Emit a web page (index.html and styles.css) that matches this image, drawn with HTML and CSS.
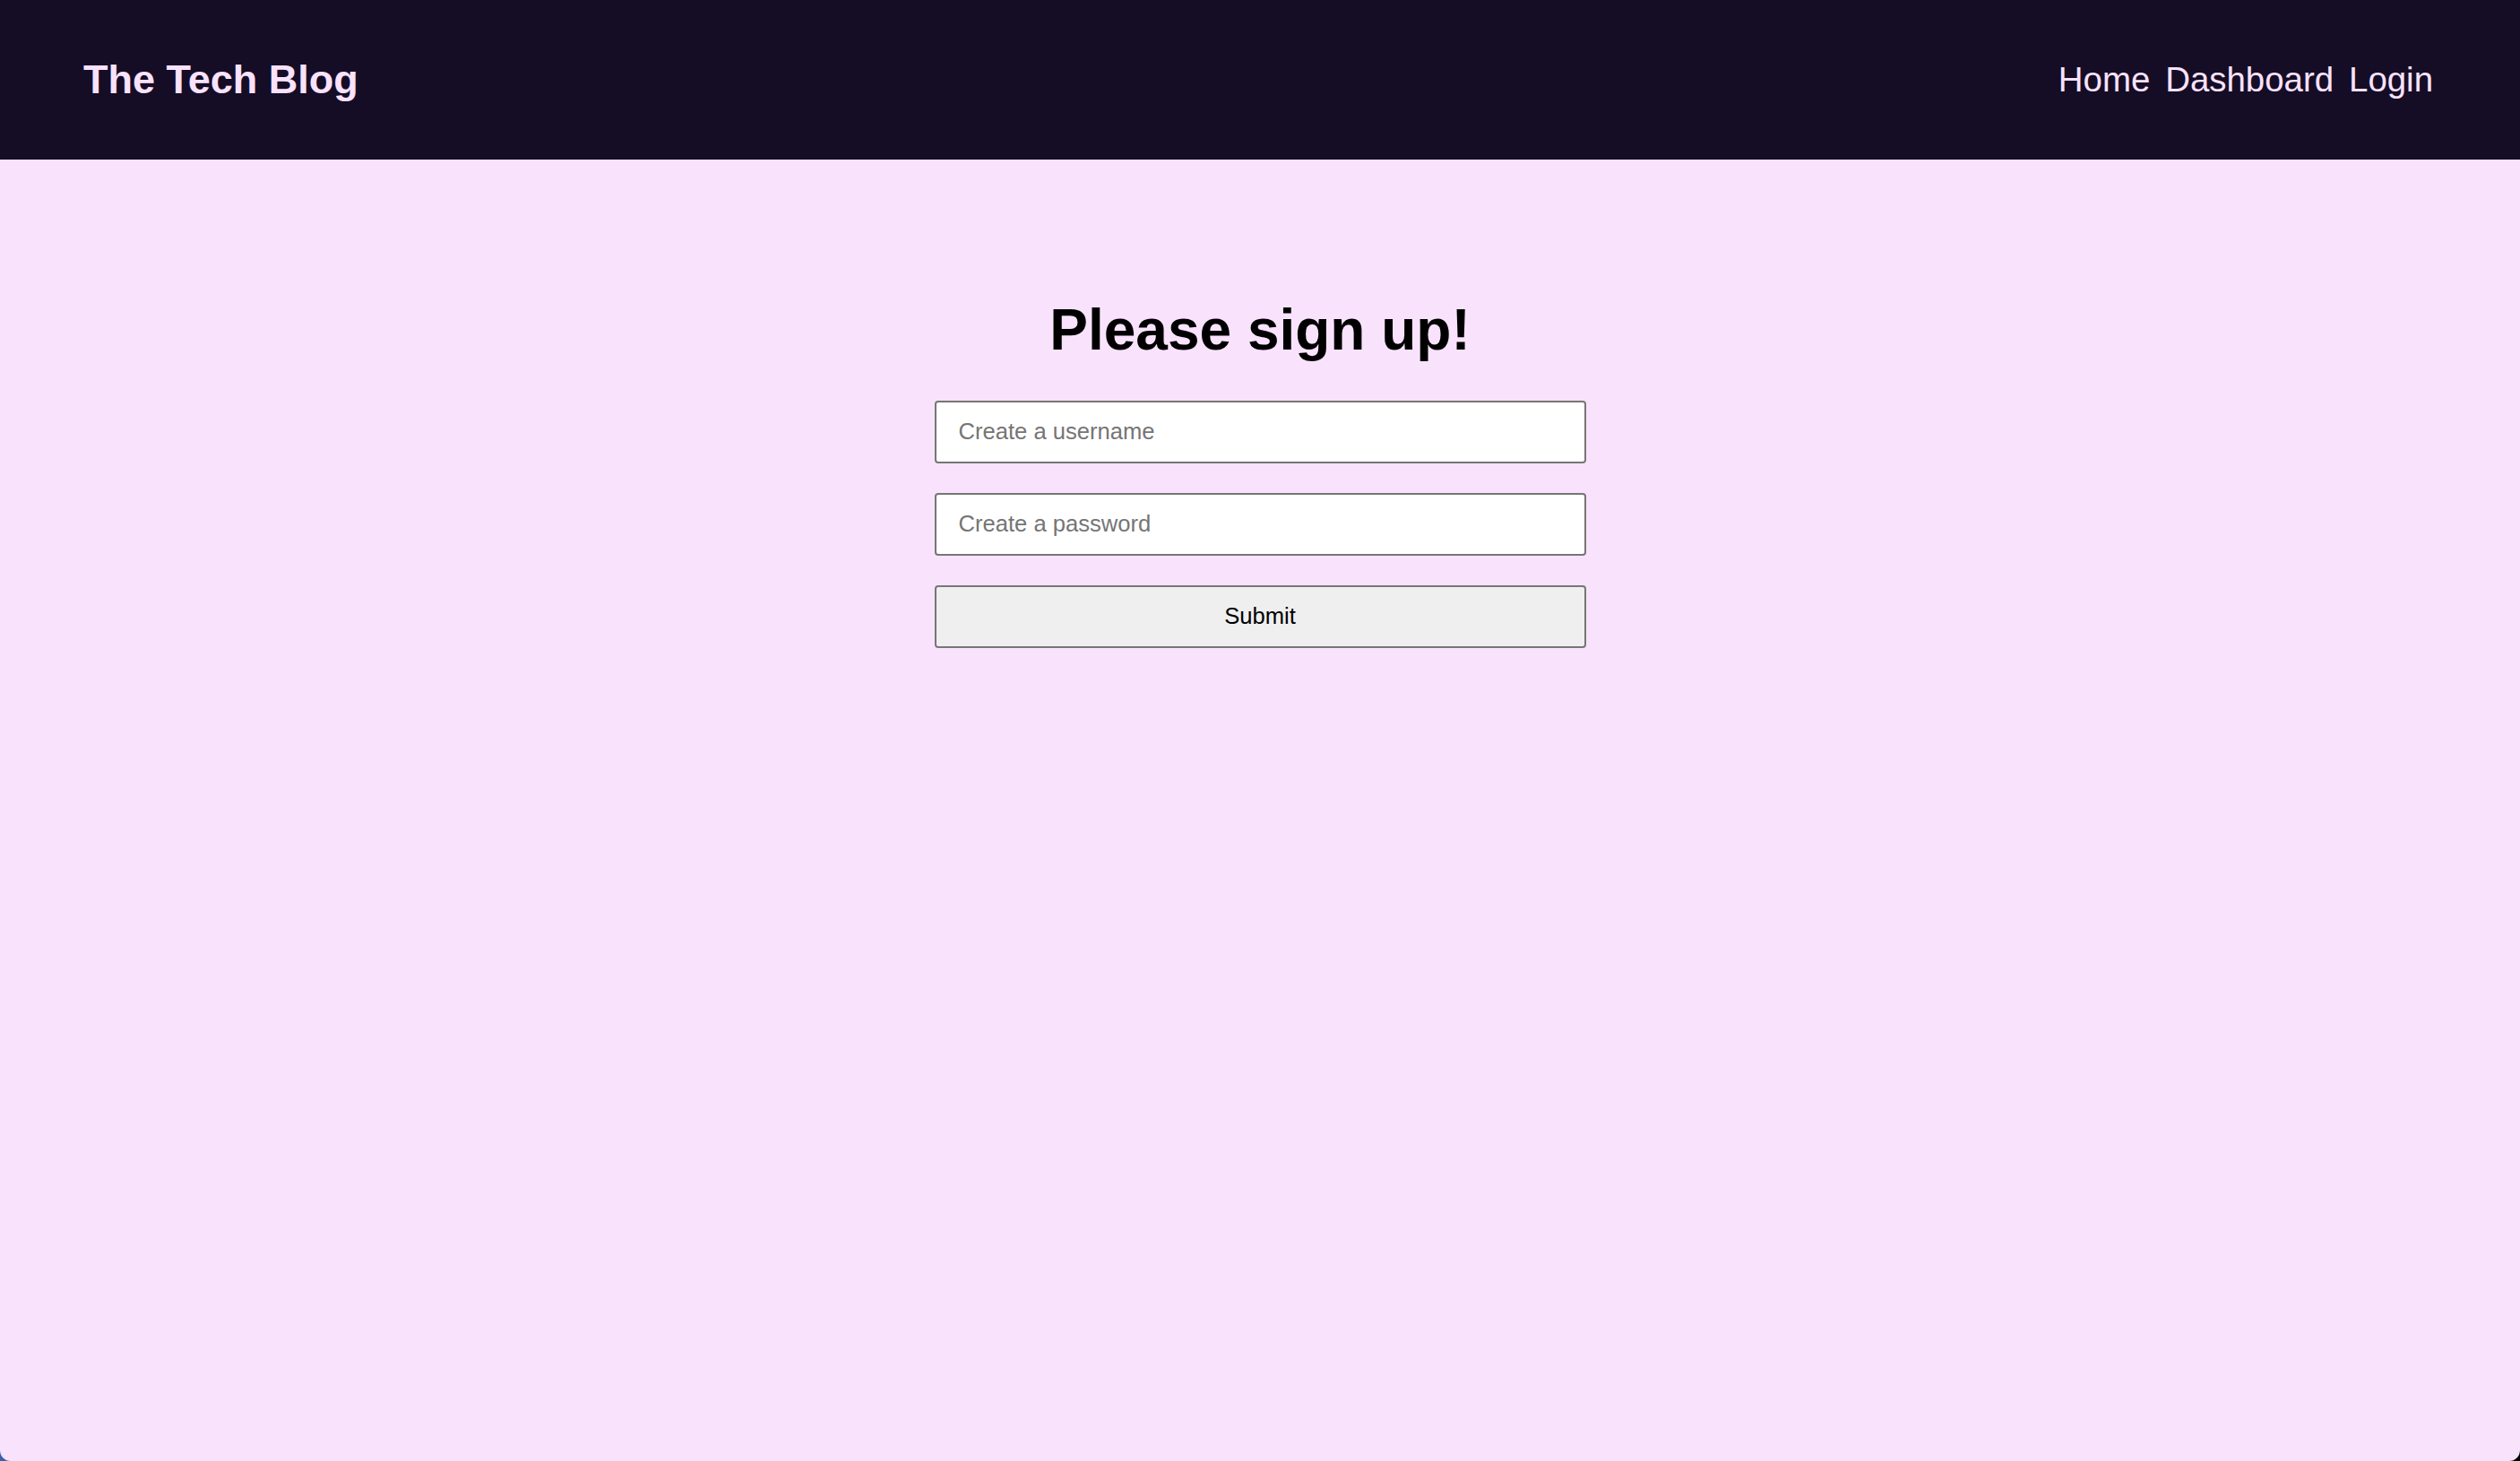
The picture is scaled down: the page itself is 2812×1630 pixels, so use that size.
FILE: index.html
```html
<!DOCTYPE html>
<html lang="en">
<head>
<meta charset="utf-8">
<title>The Tech Blog</title>
<link rel="stylesheet" href="styles.css">
</head>
<body>
<div class="page">
  <header class="site-header">
    <a class="brand" href="#">The Tech Blog</a>
    <nav class="nav">
      <a class="nav-link" href="#">Home</a>
      <a class="nav-link" href="#">Dashboard</a>
      <a class="nav-link" href="#">Login</a>
    </nav>
  </header>
  <main class="main">
    <h1 class="title">Please sign up!</h1>
    <form class="signup-form">
      <input class="field" type="text" placeholder="Create a username">
      <input class="field" type="password" placeholder="Create a password">
      <button class="submit" type="submit">Submit</button>
    </form>
  </main>
</div>
</body>
</html>
```

FILE: styles.css
```css
html {
  background: linear-gradient(to right, #3b62ad 0%, #2a3560 20%, #000 100%);
}
body {
  margin: 0;
  font-family: "Liberation Sans", Arial, Helvetica, sans-serif;
}
.page {
  min-height: 100vh;
  display: flex;
  flex-direction: column;
  background: #f9e2fc;
  border-radius: 0 0 12px 12px;
  overflow: hidden;
}
.site-header {
  height: 178px;
  background: #150d26;
  display: flex;
  align-items: center;
  justify-content: space-between;
  padding: 0 97px 0 93px;
  box-sizing: border-box;
}
.brand {
  color: #f9e2fc;
  text-decoration: none;
  font-weight: bold;
  font-size: 45px;
}
.nav {
  display: flex;
  gap: 17px;
}
.nav-link {
  color: #f9e2fc;
  text-decoration: none;
  font-size: 38.4px;
}
.main {
  flex: 1;
  display: flex;
  flex-direction: column;
  align-items: center;
  padding-top: 154px;
}
.title {
  margin: 0 0 41px;
  font-size: 64px;
  line-height: 1.15;
  font-weight: bold;
  color: #000;
}
.signup-form {
  width: 727px;
  display: flex;
  flex-direction: column;
  gap: 33px;
}
.field,
.submit {
  height: 70px;
  box-sizing: border-box;
  border: 2px solid #767676;
  border-radius: 4px;
  font-family: "Liberation Sans", Arial, Helvetica, sans-serif;
  font-size: 25.6px;
}
.field {
  background: #fff;
  padding: 0 25px;
  color: #000;
}
.field::placeholder {
  color: #757575;
}
.submit {
  background: #efefef;
  color: #000;
}
```
